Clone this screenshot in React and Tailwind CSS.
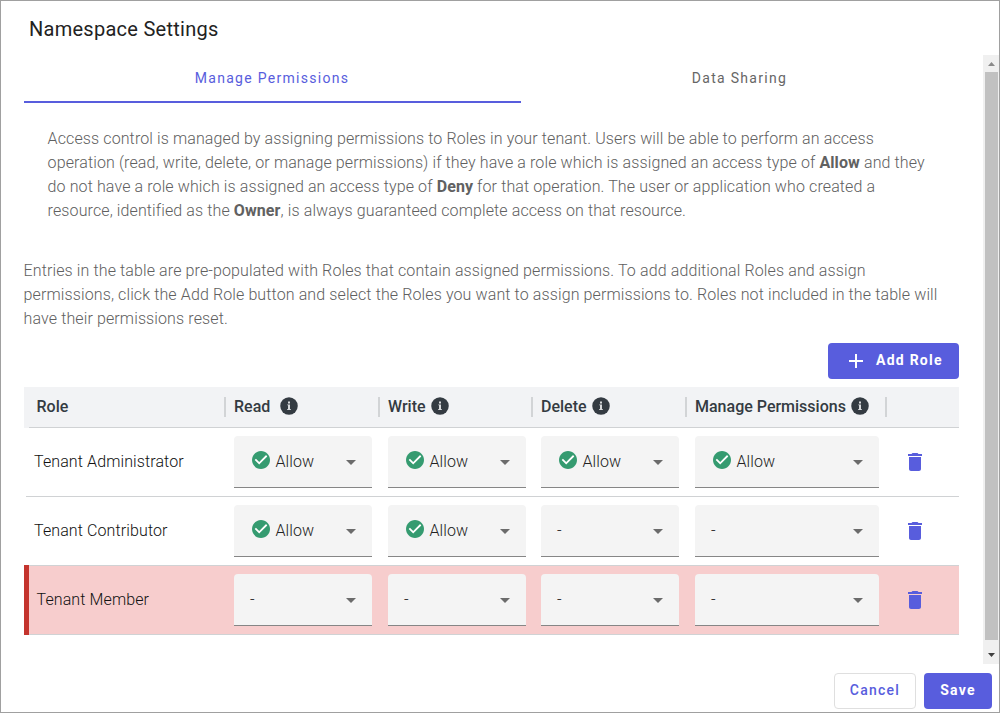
const COLS = 'grid grid-cols-[202px_154px_153px_154px_200px_72px]';

const ROWS = [
  { role: 'Tenant Administrator', access: ['Allow', 'Allow', 'Allow', 'Allow'] },
  { role: 'Tenant Contributor', access: ['Allow', 'Allow', '-', '-'] },
  { role: 'Tenant Member', access: ['-', '-', '-', '-'], flagged: true },
];

function InfoIcon({ className }) {
  return (
    <svg viewBox="0 0 18 18" className={`-mt-[3px] size-[18px] shrink-0 ${className}`}>
      <circle cx="9" cy="9" r="8.75" fill="#343b42" />
      <rect x="8" y="4.5" width="2" height="2" fill="#d8dadc" />
      <path d="M7.2 7.4H10v4.6h.8v.9H7.2V12H8V8.3h-.8z" fill="#d8dadc" />
    </svg>
  );
}

function CheckIcon() {
  return (
    <svg viewBox="2 2 20 20" className="mr-[6px] ml-[1.5px] -mt-[3px] size-[18px]">
      <path
        fill="#359b70"
        d="M12 2C6.48 2 2 6.48 2 12s4.48 10 10 10 10-4.48 10-10S17.52 2 12 2z"
      />
      <path fill="#fff" d="M10 17l-5-5 1.41-1.41L10 14.17l7.59-7.59L19 8z" />
    </svg>
  );
}

function TrashIcon() {
  return (
    <svg viewBox="5 3 14 18" className="h-[18px] w-[14px]">
      <path fill="#585ddd" d="M6 19c0 1.1.9 2 2 2h8c1.1 0 2-.9 2-2V7H6v12zM19 4h-3.5l-1-1h-5l-1 1H5v2h14V4z" />
    </svg>
  );
}

function Select({ value, className }) {
  return (
    <div
      className={`mt-2 ml-2 flex h-[52px] items-center rounded-t-[4px] border-b border-[#868686] bg-[#f4f4f4] pr-4 pl-4 font-light tracking-[0.11px] text-[#222] ${className}`}
    >
      {value === 'Allow' && <CheckIcon />}
      <span className="flex-1">{value}</span>
      <svg viewBox="0 0 10 5" className="mt-[2px] h-[5px] w-[10px]">
        <path d="M0 0h10L5 5z" fill="#6b6b6b" />
      </svg>
    </div>
  );
}

function HeaderCell({ label, gap }) {
  return (
    <div className="flex h-5 items-center border-r-2 border-[#d2d4d6] pl-2">
      <span>{label}</span>
      <InfoIcon className={gap} />
    </div>
  );
}

function Row({ role, access, flagged }) {
  return (
    <div className={`relative h-[69px] ${flagged ? 'bg-[#f7cdcd]' : ''}`}>
      <div className={`${COLS} h-full`}>
        <div className={`flex items-center pb-[2px] font-light tracking-[0.11px] text-[#111] ${flagged ? 'pl-[12.5px]' : 'pl-[10px]'}`}>{role}</div>
        {access.map((v, i) => (
          <Select key={i} value={v} className={i === 1 ? 'mr-[7px]' : 'mr-2'} />
        ))}
        <div className="flex items-center pb-[2px] pl-[21px]">
          <TrashIcon />
        </div>
      </div>
      <div className="absolute right-0 bottom-0 left-[2px] h-px bg-[#d0d2d4]" />
      {flagged && <div className="absolute -top-px bottom-0 left-0 w-[5px] bg-[#c4342d]" />}
    </div>
  );
}

function Strong({ children }) {
  return <b className="font-bold tracking-[0.1px] text-[#616161]">{children}</b>;
}

export default function App() {
  return (
    <div className="flex h-[713px] w-[1000px] flex-col overflow-hidden border border-[#a0a0a0] bg-white font-['Roboto',sans-serif] text-base">
      <h1 className="h-[54px] shrink-0 pt-[14px] pl-7 text-[20px] leading-7 font-[450] tracking-[0.27px] text-[#222]">
        Namespace Settings
      </h1>
      <div className="flex h-[609px] shrink-0">
        <main className="flex-1 pl-[23px]">
          <nav className="flex h-12 w-[935px] text-[14px] font-[450] tracking-[1.29px]">
            <div className="flex w-[497px] items-center justify-center border-b-2 border-[#585ddd] pr-px text-[#585ddd]">
              Manage Permissions
            </div>
            <div className="flex flex-1 items-center justify-center border-b-2 border-transparent pr-px text-[#666]">
              Data Sharing
            </div>
          </nav>
          <p className="mt-6 ml-[23.6px] leading-6 font-light tracking-[0.112px] whitespace-nowrap text-[#606060]">
            Access control is managed by assigning permissions to Roles in your tenant. Users will be able to perform an access
            <br />
            operation (read, write, delete, or manage permissions) if they have a role which is assigned an access type of{' '}
            <Strong>Allow</Strong> and they
            <br />
            do not have a role which is assigned an access type of <Strong>Deny</Strong> for that operation. The
            user or application who created a
            <br />
            resource, identified as the <Strong>Owner</Strong>, is always guaranteed complete access on that
            resource.
          </p>
          <p className="mt-9 -ml-[0.4px] leading-6 font-light tracking-[0.115px] whitespace-nowrap text-[#606060]">
            Entries in the table are pre-populated with Roles that contain assigned permissions. To add additional Roles and assign
            <br />
            permissions, click the Add Role button and select the Roles you want to assign permissions to. Roles not included in the table will
            <br />
            have their permissions reset.
          </p>
          <div className="mt-3 flex w-[935px] justify-end">
            <button className="flex h-9 w-[131px] items-center rounded-[4px] bg-[#585ddd] pl-[21px] text-[14px] font-bold tracking-[1.25px] text-white">
              <svg viewBox="0 0 14 14" className="mr-[13px] size-[14px]">
                <path d="M6 0h2v6h6v2H8v6H6V8H0V6h6z" fill="#fff" />
              </svg>
              <span className="-mt-[2px]">Add Role</span>
            </button>
          </div>
          <section className="mt-2 w-[935px]">
            <div className="relative h-[41px] bg-[#f2f3f5] pt-[10px] font-medium text-[#343b42]">
              <div className={COLS}>
                <div className="flex h-5 items-center border-r-2 border-[#d2d4d6] pl-[12.5px]">Role</div>
                <HeaderCell label="Read" gap="ml-[9.5px]" />
                <HeaderCell label="Write" gap="ml-[5px]" />
                <HeaderCell label="Delete" gap="ml-[5.5px]" />
                <HeaderCell label="Manage Permissions" gap="ml-[5.5px]" />
              </div>
              <div className="absolute right-0 bottom-0 left-[5px] h-px bg-[#d0d2d4]" />
            </div>
            {ROWS.map((r) => (
              <Row key={r.role} {...r} />
            ))}
          </section>
        </main>
        <div className="flex w-4 flex-col items-center bg-[#f0f0f0]">
          <div className="flex h-[17px] items-center">
            <svg viewBox="0 0 7 4" className="h-[4px] w-[7px]">
              <path d="M3.5 0L7 4H0z" fill="#8a8a8a" />
            </svg>
          </div>
          <div className="ml-[1px] h-[568px] w-[13px] bg-[#c1c1c1]" />
          <svg viewBox="0 0 7 4" className="mt-[13px] h-[4px] w-[7px]">
            <path d="M0 0h7L3.5 4z" fill="#404040" />
          </svg>
        </div>
      </div>
      <footer className="flex justify-end gap-2 pt-[9px] pr-[7px] text-[14px] tracking-[1.25px]">
        <button className="h-9 w-[82px] rounded-[4px] border border-[#dfdfdf] pb-[2px] font-medium text-[#585ddd]">Cancel</button>
        <button className="h-9 w-[68px] rounded-[4px] bg-[#585ddd] pb-[2px] font-bold text-white">Save</button>
      </footer>
    </div>
  );
}
